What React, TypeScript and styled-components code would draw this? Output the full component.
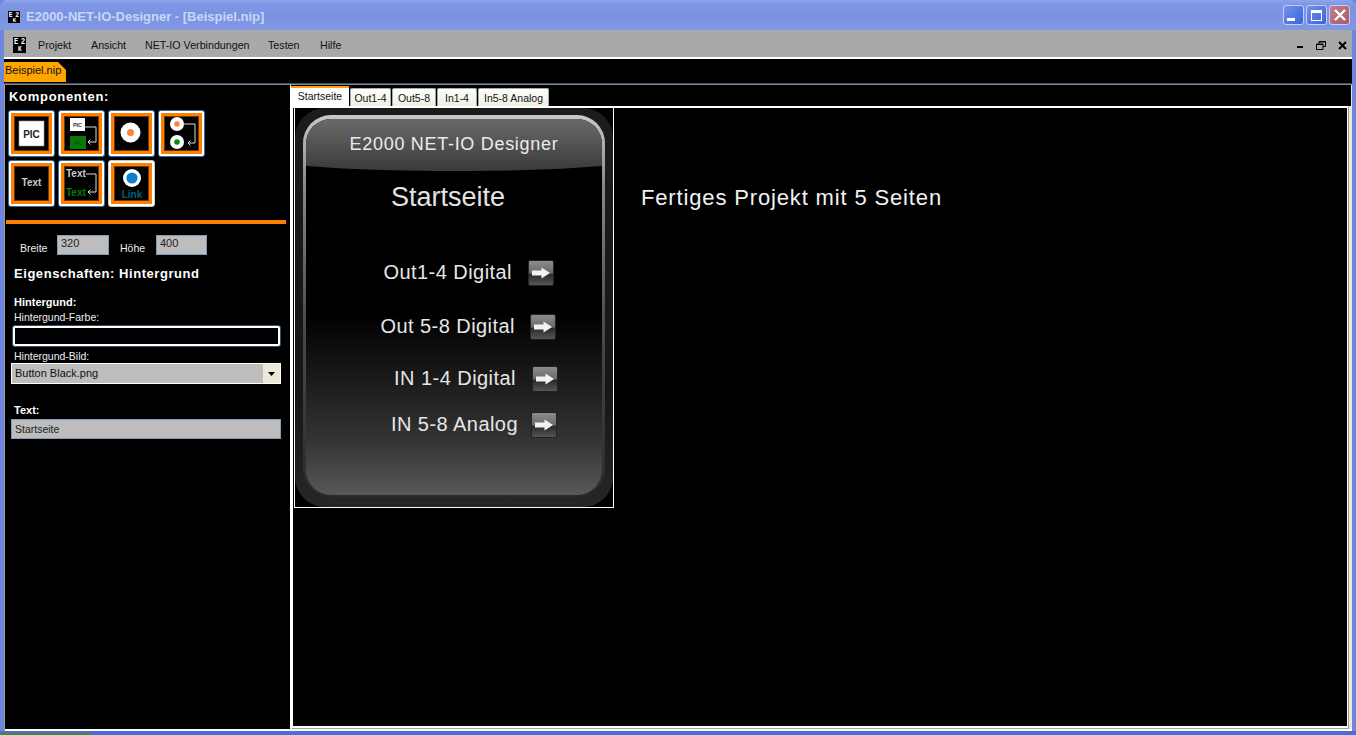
import styled, { createGlobalStyle } from "styled-components";

const GlobalStyle = createGlobalStyle`
  html, body {
    margin: 0;
    padding: 0;
    background: #000;
    overflow: hidden;
  }
  * {
    box-sizing: border-box;
  }
`;

const uiFont = `"Liberation Sans", Arial, sans-serif`;

const menuItems = [
  { id: 1, text: "Projekt", width: 53 },
  { id: 2, text: "Ansicht", width: 54 },
  { id: 3, text: "NET-IO Verbindungen", width: 123 },
  { id: 4, text: "Testen", width: 52 },
  { id: 5, text: "Hilfe", width: 40 },
];

const pageTabs = [
  { id: 1, text: "Out1-4", width: 41 },
  { id: 2, text: "Out5-8", width: 44 },
  { id: 3, text: "In1-4", width: 40 },
  { id: 4, text: "In5-8 Analog", width: 71 },
];

const phoneRows = [
  { id: 1, text: "Out1-4 Digital", right: 48, top: 48, gap: 16 },
  { id: 2, text: "Out 5-8 Digital", right: 46, top: 28, gap: 15 },
  { id: 3, text: "IN 1-4 Digital", right: 44, top: 26, gap: 16 },
  { id: 4, text: "IN 5-8 Analog", right: 45, top: 20, gap: 13 },
];

const Logo = ({ width, height }: { width: number; height: number }) => (
  <svg width={width} height={height} viewBox="0 0 14 14" preserveAspectRatio="none">
    <rect width="14" height="14" fill="#000" />
    <text x="1" y="6.5" fontSize="7.5" fontWeight="700" textLength="12" fill="#fff" fontFamily="Liberation Mono, monospace">E2</text>
    <text x="5.5" y="12.4" fontSize="6.5" fontWeight="700" fill="#fff" fontFamily="Liberation Mono, monospace">K</text>
  </svg>
);

const PicIcon = () => (
  <svg width="37" height="37" viewBox="0 0 37 37">
    <rect x="6" y="6" width="25" height="25" fill="#fff" stroke="#999" strokeWidth="0.6" />
    <text x="18.5" y="22.5" textAnchor="middle" fontSize="10" fontWeight="700" fill="#222" fontFamily="Liberation Sans, sans-serif">PIC</text>
  </svg>
);

const PicSwapIcon = () => (
  <svg width="37" height="37" viewBox="0 0 37 37">
    <rect x="7" y="3" width="15" height="13" fill="#fff" />
    <text x="14.5" y="12" textAnchor="middle" fontSize="5.5" fontWeight="700" fill="#333" fontFamily="Liberation Sans, sans-serif">PIC</text>
    <rect x="7" y="21" width="16" height="13" fill="#067a06" />
    <text x="15" y="30" textAnchor="middle" fontSize="5.5" fontWeight="700" fill="#1d4d1d" fontFamily="Liberation Sans, sans-serif">PIC</text>
    <path d="M22 12H33V27H25M27.5 24.5L25 27L27.5 29.5" fill="none" stroke="#ddd" strokeWidth="1" />
  </svg>
);

const LedIcon = () => (
  <svg width="37" height="37" viewBox="0 0 37 37">
    <circle cx="17.5" cy="17.5" r="10" fill="#fff" />
    <circle cx="17.5" cy="17.5" r="3.5" fill="#ff8040" />
  </svg>
);

const LedSwapIcon = () => (
  <svg width="37" height="37" viewBox="0 0 37 37">
    <circle cx="14" cy="9" r="7" fill="#fff" />
    <circle cx="14" cy="9" r="2.8" fill="#ff8040" />
    <circle cx="14" cy="27" r="7" fill="#fff" />
    <circle cx="14" cy="27" r="2.8" fill="#0a8a0a" />
    <path d="M21 9H32V28H25M27.5 25.5L25 28L27.5 30.5" fill="none" stroke="#ddd" strokeWidth="1" />
  </svg>
);

const TextIcon = () => (
  <svg width="37" height="37" viewBox="0 0 37 37">
    <text x="18.5" y="21" textAnchor="middle" fontSize="10" fontWeight="700" fill="#ccc" fontFamily="Liberation Sans, sans-serif">Text</text>
  </svg>
);

const TextSwapIcon = () => (
  <svg width="37" height="37" viewBox="0 0 37 37">
    <text x="3" y="12" fontSize="10" fontWeight="700" fill="#ccc" fontFamily="Liberation Sans, sans-serif">Text</text>
    <text x="3" y="31" fontSize="10" fontWeight="700" fill="#0a7a0a" fontFamily="Liberation Sans, sans-serif">Text</text>
    <path d="M23 9H33V27H25M27.5 24.5L25 27L27.5 29.5" fill="none" stroke="#ddd" strokeWidth="1" />
  </svg>
);

const LinkIcon = () => (
  <svg width="37" height="37" viewBox="0 0 37 37">
    <circle cx="19" cy="13" r="9" fill="#fff" />
    <circle cx="19" cy="13" r="5.6" fill="#1080c8" />
    <text x="19" y="33" textAnchor="middle" fontSize="10" fontWeight="700" fill="#056070" fontFamily="Liberation Sans, sans-serif">Link</text>
  </svg>
);

const ArrowIcon = () => (
  <svg width="18" height="12" viewBox="0 0 18 12">
    <path d="M0 3.5H9.5V0.5L18 6L9.5 11.5V8.5H0Z" fill="#f2f2f2" />
  </svg>
);

const App = () => {
  return (
    <Window>
      <GlobalStyle />
      <TitleBar>
        <TitleLeft>
          <Logo width={12} height={12} />
          <TitleText>E2000-NET-IO-Designer - [Beispiel.nip]</TitleText>
        </TitleLeft>
        <TitleButtons>
          <CaptionButton>
            <MinGlyph />
          </CaptionButton>
          <CaptionButton>
            <MaxGlyph />
          </CaptionButton>
          <CaptionButton $close>
            <svg width="14" height="14" viewBox="0 0 14 14">
              <path d="M2 2L12 12M12 2L2 12" stroke="#fff" strokeWidth="2.4" />
            </svg>
          </CaptionButton>
        </TitleButtons>
      </TitleBar>

      <Client>
        <MenuBar>
          <MenuLogo>
            <Logo width={13} height={16} />
          </MenuLogo>
          {menuItems.map((item) => (
            <MenuItem key={item.id} $width={item.width}>
              {item.text}
            </MenuItem>
          ))}
          <MdiControls>
            <MinMark width="7" height="4" viewBox="0 0 7 4">
              <rect y="1" width="6" height="2" fill="#000" />
            </MinMark>
            <svg width="10" height="9" viewBox="0 0 10 9">
              <path d="M3 2.5V.5H9.5V5.5H7M.5 3H7V8.5H.5Z" fill="none" stroke="#000" />
              <path d="M3 1H9.5M.5 3.5H7" stroke="#000" />
            </svg>
            <svg width="9" height="9" viewBox="0 0 9 9">
              <path d="M1 1L8 8M8 1L1 8" stroke="#000" strokeWidth="2" />
            </svg>
          </MdiControls>
        </MenuBar>

        <DocStrip>
          <DocTab>Beispiel.nip</DocTab>
        </DocStrip>

        <Workspace>
          <Sidebar>
            <SidebarTitle>Komponenten:</SidebarTitle>
            <ToolGrid>
              <ToolButton><Inner><PicIcon /></Inner></ToolButton>
              <ToolButton><Inner><PicSwapIcon /></Inner></ToolButton>
              <ToolButton><Inner><LedIcon /></Inner></ToolButton>
              <ToolButton><Inner><LedSwapIcon /></Inner></ToolButton>
              <ToolButton><Inner><TextIcon /></Inner></ToolButton>
              <ToolButton><Inner><TextSwapIcon /></Inner></ToolButton>
              <ToolButton $hover><Inner><LinkIcon /></Inner></ToolButton>
            </ToolGrid>
            <OrangeRule />
            <SizeRow>
              <SizeLabel $width={27}>Breite</SizeLabel>
              <SizeInput $width={52}>320</SizeInput>
              <SizeLabel $width={26}>Höhe</SizeLabel>
              <SizeInput $width={51}>400</SizeInput>
            </SizeRow>
            <PropsTitle>Eigenschaften: Hintergrund</PropsTitle>
            <GroupTitle>Hintergund:</GroupTitle>
            <FieldLabel>Hintergund-Farbe:</FieldLabel>
            <ColorField />
            <FieldLabel>Hintergund-Bild:</FieldLabel>
            <SelectField>
              <SelectValue>Button Black.png</SelectValue>
              <SelectArrow>
                <svg width="7" height="4" viewBox="0 0 7 4">
                  <path d="M0 0H7L3.5 4Z" fill="#000" />
                </svg>
              </SelectArrow>
            </SelectField>
            <TextGroupTitle>Text:</TextGroupTitle>
            <TextField>Startseite</TextField>
          </Sidebar>

          <Editor>
            <TabRow>
              <ActiveTab>Startseite</ActiveTab>
              {pageTabs.map((tab) => (
                <PageTab key={tab.id} $width={tab.width}>
                  {tab.text}
                </PageTab>
              ))}
            </TabRow>
            <Stage>
              <Phone>
                <PhoneRim>
                  <PhoneRing>
                    <PhoneScreen>
                      <PhoneHeader>E2000 NET-IO Designer</PhoneHeader>
                      <PhoneTitle>Startseite</PhoneTitle>
                      {phoneRows.map((row) => (
                        <PhoneRow key={row.id} $right={row.right} $top={row.top} $gap={row.gap}>
                          <PhoneRowText>{row.text}</PhoneRowText>
                          <ArrowButton>
                            <ArrowIcon />
                          </ArrowButton>
                        </PhoneRow>
                      ))}
                    </PhoneScreen>
                  </PhoneRing>
                </PhoneRim>
              </Phone>
              <StageNote>Fertiges Projekt mit 5 Seiten</StageNote>
            </Stage>
          </Editor>
        </Workspace>
      </Client>
      <BottomEdge>
        <BottomSliver />
      </BottomEdge>
    </Window>
  );
};
export default App;

const Window = styled.div`
  width: 1356px;
  height: 735px;
  display: flex;
  flex-direction: column;
  background: #6f86de;
  font-family: ${uiFont};
  overflow: hidden;
`;

const TitleBar = styled.div`
  height: 30px;
  flex: none;
  display: flex;
  align-items: center;
  justify-content: space-between;
  padding: 3px 6px 0 8px;
  background: linear-gradient(to bottom, #8ea5e8 0, #7f97e6 4px, #7b92e2 50%, #8198e4 100%);
  border-radius: 7px 7px 0 0;
`;

const TitleLeft = styled.div`
  display: flex;
  align-items: center;
  gap: 6px;
`;

const TitleText = styled.span`
  color: #c9d6f5;
  font-size: 13px;
  font-weight: 700;
  white-space: nowrap;
`;

const TitleButtons = styled.div`
  display: flex;
  gap: 2px;
  margin-top: -3px;
`;

const CaptionButton = styled.div<{ $close?: boolean }>`
  width: 21px;
  height: 20px;
  display: flex;
  align-items: center;
  justify-content: center;
  border: 1px solid #c3d0f4;
  border-radius: 3px;
  background: ${(p) =>
    p.$close
      ? "linear-gradient(135deg, #c07f8e, #ab5a6c)"
      : "linear-gradient(135deg, #6f94ec, #3d62dc)"};
`;

const MinGlyph = styled.div`
  width: 8px;
  height: 3px;
  background: #fff;
  margin: 8px 5px 0 0;
`;

const MaxGlyph = styled.div`
  width: 11px;
  height: 11px;
  border: 1px solid #fff;
  border-top-width: 3px;
`;

const Client = styled.div`
  flex: 1;
  min-height: 0;
  display: flex;
  flex-direction: column;
  margin: 0 4px;
  background: #ece9d8;
`;

const MenuBar = styled.div`
  height: 29px;
  flex: none;
  display: flex;
  align-items: center;
  padding-top: 3px;
  background: #a9a9a9;
  border-bottom: 2px solid #fff;
`;

const MenuLogo = styled.div`
  width: 34px;
  display: flex;
  padding-left: 9px;
`;

const MenuItem = styled.div<{ $width: number }>`
  width: ${(p) => p.$width}px;
  color: #111;
  font-size: 10.7px;
  white-space: nowrap;
`;

const MdiControls = styled.div`
  margin-left: auto;
  display: flex;
  align-items: center;
  gap: 12px;
  padding-right: 5px;
`;

const MinMark = styled.svg`
  margin-top: 4px;
`;

const DocStrip = styled.div`
  height: 25px;
  flex: none;
  display: flex;
  align-items: flex-end;
  padding-bottom: 1px;
  background: #000;
  border-bottom: 1px solid #3a5070;
`;

const DocTab = styled.div`
  width: 62px;
  height: 20px;
  padding: 2px 0 0 1px;
  background: #ffa500;
  color: #111;
  font-size: 11px;
  clip-path: polygon(0 0, 54px 0, 100% 8px, 100% 100%, 0 100%);
`;

const Workspace = styled.div`
  flex: 1;
  min-height: 0;
  display: flex;
  border-top: 1px solid #8a8a80;
  border-left: 1px solid #9a9a90;
  padding-bottom: 2px;
  background: #fff;
`;

const Sidebar = styled.aside`
  width: 285px;
  flex: none;
  display: flex;
  flex-direction: column;
  background: #000;
  padding-top: 4px;
  color: #fff;
`;

const SidebarTitle = styled.div`
  margin-left: 4px;
  height: 16px;
  font-size: 13px;
  font-weight: 700;
  letter-spacing: 0.7px;
`;

const ToolGrid = styled.div`
  display: grid;
  grid-template-columns: repeat(4, 47px);
  grid-auto-rows: 47px;
  gap: 3px;
  margin: 5px 0 0 3px;
`;

const ToolButton = styled.div<{ $hover?: boolean }>`
  border: 1px solid ${(p) => (p.$hover ? "#c9c9c0" : "#2f6ea5")};
  border-radius: 3px;
  background: #fff;
  padding: 2px;
`;

const Inner = styled.div`
  width: 100%;
  height: 100%;
  display: flex;
  align-items: center;
  justify-content: center;
  background: #000;
  border: 3px solid #ff8000;
  outline: 1px solid #6b3a00;
  outline-offset: -4px;

  svg {
    flex: none;
  }
`;

const OrangeRule = styled.div`
  height: 4px;
  margin: 13px 4px 0 1px;
  background: #ff8000;
`;

const SizeRow = styled.div`
  display: flex;
  align-items: flex-start;
  margin: 11px 0 0 15px;
  gap: 10px;
`;

const SizeLabel = styled.span<{ $width: number }>`
  width: ${(p) => p.$width}px;
  margin-top: 7px;
  font-size: 10.5px;
  color: #eee;
  white-space: nowrap;
`;

const SizeInput = styled.div<{ $width: number }>`
  width: ${(p) => p.$width}px;
  height: 20px;
  margin-right: 1px;
  padding: 1px 0 0 3px;
  background: #bdbdbd;
  border: 1px solid #7f9db9;
  color: #222;
  font-size: 11px;
`;

const PropsTitle = styled.div`
  margin: 11px 0 0 9px;
  height: 16px;
  font-size: 13px;
  font-weight: 700;
  letter-spacing: 0.55px;
`;

const GroupTitle = styled.div`
  margin: 14px 0 0 9px;
  height: 13px;
  font-size: 11px;
  font-weight: 700;
`;

const FieldLabel = styled.div`
  margin: 2px 0 0 9px;
  height: 13px;
  font-size: 10.5px;
  color: #eee;
`;

const ColorField = styled.div`
  width: 267px;
  height: 20px;
  margin: 2px 0 2px 8px;
  background: #000;
  border: 2px solid #fff;
  border-radius: 2px;
  box-shadow: 0 0 0 1px #33506e;
`;

const SelectField = styled.div`
  width: 270px;
  height: 21px;
  margin: 0 0 0 6px;
  display: flex;
  background: #bdbdbd;
  border: 1px solid #fff;
`;

const SelectValue = styled.div`
  flex: 1;
  padding: 3px 0 0 3px;
  font-size: 11px;
  color: #111;
`;

const SelectArrow = styled.div`
  width: 17px;
  display: flex;
  align-items: center;
  justify-content: center;
  background: #ece9d8;
`;

const TextGroupTitle = styled.div`
  margin: 20px 0 0 9px;
  height: 13px;
  font-size: 11px;
  font-weight: 700;
`;

const TextField = styled.div`
  width: 270px;
  height: 20px;
  margin: 2px 0 0 6px;
  padding: 3px 0 0 3px;
  background: #bdbdbd;
  border: 1px solid #7f9db9;
  color: #222;
  font-size: 10.5px;
`;

const Editor = styled.main`
  flex: 1;
  min-width: 0;
  display: flex;
  flex-direction: column;
  background: #ece9d8;
  margin-left: 1px;
  padding-bottom: 1px;
`;

const TabRow = styled.div`
  height: 21px;
  flex: none;
  display: flex;
  align-items: flex-end;
  gap: 1px;
  background: #000;
  margin-right: 1px;
`;

const ActiveTab = styled.div`
  width: 58px;
  height: 20px;
  text-align: center;
  padding-top: 2px;
  background: #fff;
  border-top: 2px solid #ffa500;
  color: #111;
  font-size: 10.5px;
`;

const PageTab = styled.div<{ $width: number }>`
  width: ${(p) => p.$width}px;
  height: 18px;
  text-align: center;
  padding-top: 3px;
  background: linear-gradient(to bottom, #fff, #f1efe2);
  border: 1px solid #a0acb4;
  border-bottom: 0;
  border-radius: 2px 2px 0 0;
  color: #111;
  font-size: 10.5px;
`;

const Stage = styled.div`
  flex: 1;
  min-height: 0;
  display: flex;
  align-items: flex-start;
  margin-right: 4px;
  background: #000;
  border: 1px solid #fff;
  border-width: 2px 1px 2px 2px;
  box-shadow: 1px 1px 0 #a0a098;
`;

const Phone = styled.div`
  width: 320px;
  height: 400px;
  flex: none;
  margin-left: 1px;
  background: #000;
  border: 1px solid #fff;
  border-top: 0;
`;

const PhoneRim = styled.div`
  width: 100%;
  height: 100%;
  padding: 7px 8px 10px 8px;
  background: linear-gradient(to bottom, #1c1c1c, #161616 70%, #262626);
  border-radius: 30px;
`;

const PhoneRing = styled.div`
  height: 100%;
  padding: 4px 3px 2px 3px;
  background: linear-gradient(to bottom, #c8c8c8, #8a8a8a 18%, #4a4a4a 55%, #2a2a2a 100%);
  border-radius: 28px;
`;

const PhoneScreen = styled.div`
  height: 100%;
  display: flex;
  flex-direction: column;
  border-radius: 25px;
  overflow: hidden;
  background: linear-gradient(to bottom, #000 0, #000 52%, #333 85%, #585858 100%);
`;

const PhoneHeader = styled.div`
  height: 52px;
  flex: none;
  margin: 0 -20px;
  padding-top: 15px;
  text-align: center;
  color: #ececec;
  font-size: 18px;
  letter-spacing: 0.7px;
  background: linear-gradient(to bottom, #6a6a6a, #3a3a3a);
  border-radius: 0 0 50% 50% / 0 0 10px 10px;
`;

const PhoneTitle = styled.div`
  height: 30px;
  margin-top: 11px;
  padding-right: 12px;
  text-align: center;
  color: #e2e2e2;
  font-size: 27px;
`;

const PhoneRow = styled.div<{ $right: number; $top: number; $gap: number }>`
  display: flex;
  align-items: center;
  justify-content: flex-end;
  gap: ${(p) => p.$gap}px;
  height: 26px;
  flex: none;
  margin-top: ${(p) => p.$top}px;
  padding-right: ${(p) => p.$right}px;
`;

const PhoneRowText = styled.span`
  padding-bottom: 2px;
  color: #e6e6e6;
  font-size: 20px;
  letter-spacing: 0.45px;
  white-space: nowrap;
`;

const ArrowButton = styled.div`
  width: 26px;
  height: 26px;
  flex: none;
  display: flex;
  align-items: center;
  justify-content: center;
  border: 1px solid #222;
  border-radius: 2px;
  background: linear-gradient(to bottom, #8c8c8c, #6a6a6a 50%, #2a2a2a 55%, #555 100%);
`;

const StageNote = styled.div`
  margin: 77px 0 0 27px;
  color: #f2f2f2;
  font-size: 22px;
  letter-spacing: 0.85px;
  white-space: nowrap;
`;

const BottomEdge = styled.div`
  height: 4px;
  flex: none;
  display: flex;
  align-items: flex-end;
  background: #4f6bd8;
`;

const BottomSliver = styled.div`
  width: 92px;
  height: 2px;
  background: #3f8a3f;
`;
